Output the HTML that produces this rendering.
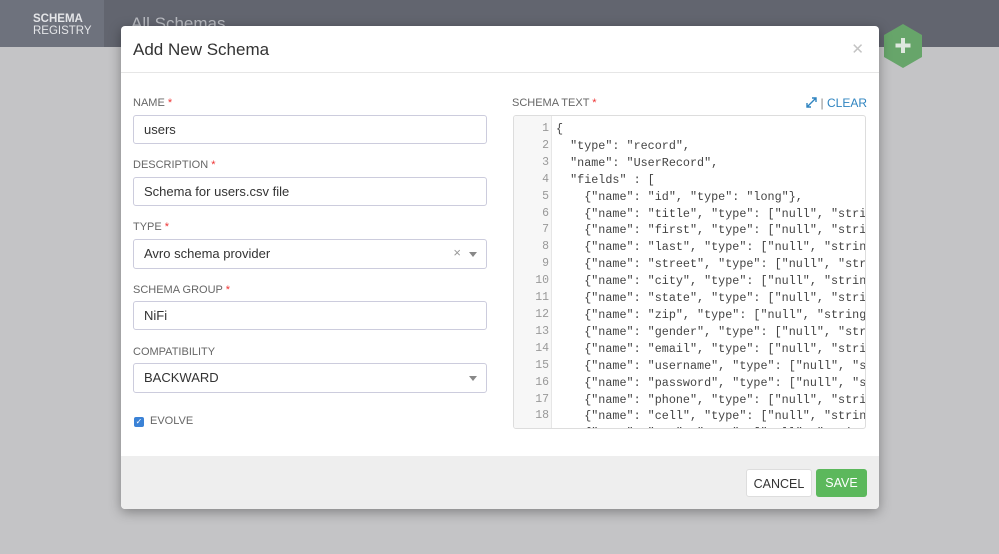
<!DOCTYPE html>
<html><head><style>
*{box-sizing:border-box;margin:0;padding:0}
body{width:999px;height:554px;overflow:hidden;background:#c4c4c6;font-family:"Liberation Sans",sans-serif;position:relative}
.top{position:absolute;left:0;top:0;width:999px;height:47px;background:#62656f}
.logo{position:absolute;left:0;top:0;width:104px;height:47px;background:#6e727d;color:#e4e5e8;font-size:11.5px;line-height:12px;padding:13px 0 0 33px}
.logo b{display:block}
.title{position:absolute;left:131px;top:14px;color:#b8bac0;font-size:17px}
.modal{position:absolute;left:121px;top:26px;width:758px;height:483px;background:#fff;border-radius:4px;box-shadow:0 3px 12px rgba(0,0,0,.35);overflow:hidden}
.hd{height:47px;border-bottom:1px solid #e6e6e6;padding:14px 0 0 12px;font-size:17px;color:#333}
.x{position:absolute;right:15px;top:14px;color:#c4c4c4;font-size:15px}
.lbl{position:absolute;font-size:11px;color:#666}
.lbl i{color:#e33;font-style:normal}
.inp{position:absolute;left:12px;width:354px;height:29px;border:1px solid #ccd;border-radius:3px;font-size:13px;color:#333;padding:6px 10px}
.car{position:absolute;right:9px;top:12px;border:4.5px solid transparent;border-top:5px solid #888;border-bottom:0}
.ft{position:absolute;left:0;top:430px;width:758px;height:53px;background:#eeeeee}
.btn{position:absolute;top:13px;height:28px;border-radius:3px;font-size:12.5px;padding-top:7px;text-align:center}
.code{position:absolute;left:392px;top:89px;width:353px;height:314px;border:1px solid #ddd;border-radius:3px;overflow:hidden;background:#fff}
.gut{position:absolute;left:0;top:0;width:38px;height:100%;background:#f7f7f7;border-right:1px solid #e6e6e6}
pre{font-family:"Liberation Mono",monospace;font-size:11.75px;line-height:16.9px;color:#444;position:absolute;top:5px;white-space:pre}
.nums{left:0;width:35px;text-align:right;color:#999;font-size:11.5px}
</style></head><body>
<div class="top"></div>
<div class="logo"><b>SCHEMA</b>REGISTRY</div>
<div class="title">All Schemas</div>
<svg style="position:absolute;left:883px;top:24px" width="40" height="44" viewBox="0 0 40 44"><polygon points="20,0 39,11 39,33 20,44 1,33 1,11" fill="#67a56a"/><path d="M20 14v15M12.5 21.5h15" stroke="#dfe8df" stroke-width="4"/></svg>
<div class="modal">
<div class="hd">Add New Schema</div><div class="x">✕</div>
<div class="lbl" style="left:12px;top:71px">NAME <i>*</i></div>
<div class="inp" style="top:89px">users</div>
<div class="lbl" style="left:12px;top:133px">DESCRIPTION <i>*</i></div>
<div class="inp" style="top:151px">Schema for users.csv file</div>
<div class="lbl" style="left:12px;top:195px">TYPE <i>*</i></div>
<div class="inp" style="top:213px;height:30px">Avro schema provider<span style="position:absolute;right:25px;top:5px;color:#999;font-size:13px">×</span><span class="car"></span></div>
<div class="lbl" style="left:12px;top:258px">SCHEMA GROUP <i>*</i></div>
<div class="inp" style="top:275px">NiFi</div>
<div class="lbl" style="left:12px;top:320px">COMPATIBILITY</div>
<div class="inp" style="top:337px;height:30px">BACKWARD<span class="car"></span></div>
<div style="position:absolute;left:13px;top:391px;width:10px;height:10px;background:#3b82d6;border-radius:2px;color:#fff;font-size:8px;line-height:10px;text-align:center">✓</div>
<div class="lbl" style="left:29px;top:389px">EVOLVE</div>
<div class="lbl" style="left:391px;top:71px">SCHEMA TEXT <i>*</i></div>
<div style="position:absolute;right:12px;top:70px;font-size:12px;color:#2f84c0">
<svg width="11" height="11" viewBox="0 0 11 11" style="vertical-align:-1px"><path d="M1 10L10 1M6 1h4v4M1 6v4h4" stroke="#2f84c0" stroke-width="1.4" fill="none"/></svg> <span style="color:#888">|</span> CLEAR</div>
<div class="code"><div class="gut"></div>
<pre class="nums">1
2
3
4
5
6
7
8
9
10
11
12
13
14
15
16
17
18</pre>
<pre style="left:42px">{
  "type": "record",
  "name": "UserRecord",
  "fields" : [
    {"name": "id", "type": "long"},
    {"name": "title", "type": ["null", "string"]},
    {"name": "first", "type": ["null", "string"]},
    {"name": "last", "type": ["null", "string"]},
    {"name": "street", "type": ["null", "string"]},
    {"name": "city", "type": ["null", "string"]},
    {"name": "state", "type": ["null", "string"]},
    {"name": "zip", "type": ["null", "string"]},
    {"name": "gender", "type": ["null", "string"]},
    {"name": "email", "type": ["null", "string"]},
    {"name": "username", "type": ["null", "string"]},
    {"name": "password", "type": ["null", "string"]},
    {"name": "phone", "type": ["null", "string"]},
    {"name": "cell", "type": ["null", "string"]},
    {"name": "ssn", "type": ["null", "string"]}</pre>
</div>
<div class="ft">
<div class="btn" style="left:625px;width:66px;background:#fff;border:1px solid #ddd;color:#333">CANCEL</div>
<div class="btn" style="left:695px;width:51px;background:#5cb85c;color:#fff">SAVE</div>
</div>
</div>
</body></html>
